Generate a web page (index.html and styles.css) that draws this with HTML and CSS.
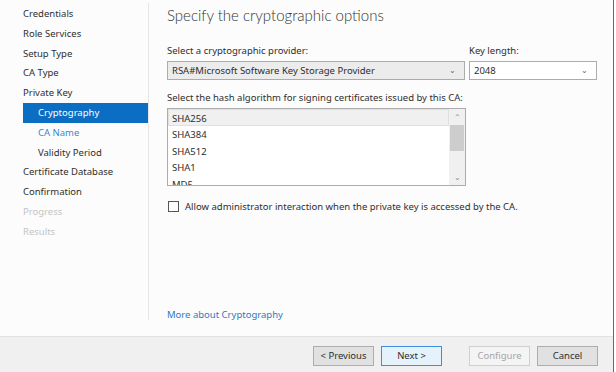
FILE: index.html
```html
<!DOCTYPE html>
<html>
<head>
<meta charset="utf-8">
<title>Specify the cryptographic options</title>
<link rel="stylesheet" href="styles.css">
</head>
<body>
<div class="Window">
    <div class="Wizard">
        <div class="Nav">
            <div class="NavItem">Credentials</div>
            <div class="NavItem">Role Services</div>
            <div class="NavItem">Setup Type</div>
            <div class="NavItem">CA Type</div>
            <div class="NavItem">Private Key</div>
            <div class="NavItem Sub Active">Cryptography</div>
            <div class="NavItem Sub Link">CA Name</div>
            <div class="NavItem Sub">Validity Period</div>
            <div class="NavItem">Certificate Database</div>
            <div class="NavItem">Confirmation</div>
            <div class="NavItem Off">Progress</div>
            <div class="NavItem Off">Results</div>
        </div>
        <div class="Main">
            <div class="Heading">Specify the cryptographic options</div>
            <div class="Row">
                <div class="Field Provider">
                    <div class="Label">Select a cryptographic provider:</div>
                    <div class="Combo Gray"><span>RSA#Microsoft Software Key Storage Provider</span><span class="Chev">&#8964;</span></div>
                </div>
                <div class="Field KeyLen">
                    <div class="Label">Key length:</div>
                    <div class="Combo"><span>2048</span><span class="Chev">&#8964;</span></div>
                </div>
            </div>
            <div class="Label">Select the hash algorithm for signing certificates issued by this CA:</div>
            <div class="List">
                <div class="Items">
                    <div class="Item Sel">SHA256</div>
                    <div class="Item">SHA384</div>
                    <div class="Item">SHA512</div>
                    <div class="Item">SHA1</div>
                    <div class="Item">MD5</div>
                </div>
                <div class="Scroll">
                    <div class="Arrow">&#8963;</div>
                    <div class="Track"><div class="Thumb"></div></div>
                    <div class="Arrow">&#8964;</div>
                </div>
            </div>
            <label class="Check"><span class="Box"></span>Allow administrator interaction when the private key is accessed by the CA.</label>
            <div class="Spacer"></div>
            <a class="More" href="#">More about Cryptography</a>
        </div>
    </div>
    <div class="Footer">
        <button class="Btn">&lt; Previous</button>
        <button class="Btn Focus">Next &gt;</button>
        <button class="Btn Disabled Gap">Configure</button>
        <button class="Btn">Cancel</button>
    </div>
</div>
</body>
</html>
```
FILE: styles.css
```css
body { margin: 0; background: #fff; font-family: "Noto Sans", "Open Sans", sans-serif; font-size: 9.5px; color: #2e2e2e; }
.Window { width: 613px; height: 372px; border-right: 1px solid #2a78c4; background: #fcfcfc; display: flex; flex-direction: column; }
.Wizard { flex: 1; display: flex; }
.Nav { width: 125px; padding: 1px 0 0 23px; border-right: 1px solid #e6e6e6; margin: 3px 0 16px 0; }
.NavItem { height: 19.8px; line-height: 19.8px; white-space: nowrap; }
.NavItem.Sub { padding-left: 15px; }
.NavItem.Active { background: #0b6ec3; color: #fff; }
.NavItem.Link { color: #3a87d4; }
.NavItem.Off { color: #c4c4c4; }
.Main { flex: 1; padding: 3px 16px 0 18px; display: flex; flex-direction: column; }
.Heading { font-family: Lato, "Noto Sans", sans-serif; font-size: 15px; font-weight: 300; color: #333; height: 24px; line-height: 24px; margin-bottom: 17px; }
.Row { display: flex; gap: 4px; margin-bottom: 11px; }
.Provider { width: 298px; }
.KeyLen { width: 128px; }
.Label { height: 14px; line-height: 14px; margin-bottom: 3px; white-space: nowrap; }
.Combo { height: 17px; border: 1px solid #acacac; background: #fff; display: flex; justify-content: space-between; align-items: center; padding: 0 8px 0 4px; line-height: 17px; }
.Combo.Gray { background: #ececec; }
.Chev { font-size: 8px; color: #666; line-height: 8px; height: 10px; }
.List { width: 297px; height: 76px; border: 1px solid #acacac; background: #fff; display: flex; overflow: hidden; margin-bottom: 14px; }
.Items { flex: 1; }
.Item { height: 16.5px; line-height: 18px; padding-left: 4px; }
.Item.Sel { background: #f0f0f0; border: 1px solid #e0e0e0; height: 15px; line-height: 17px; padding-left: 3px; }
.Scroll { width: 16px; background: #f0f0f0; display: flex; flex-direction: column; }
.Arrow { height: 16px; line-height: 16px; text-align: center; font-size: 8px; color: #8a8a8a; }
.Track { flex: 1; }
.Thumb { margin: 0 1px; height: 26px; background: #cdcdcd; }
.Check { display: flex; align-items: center; gap: 6px; padding-left: 1px; }
.Box { width: 9px; height: 9px; border: 1px solid #555; background: #fff; }
.Spacer { flex: 1; }
.More { color: #2f78c4; text-decoration: none; margin-bottom: 15px; }
.Footer { height: 35px; background: #f0f0f0; border-top: 1px solid #e3e3e3; display: flex; align-items: center; justify-content: flex-end; gap: 7px; padding-right: 15px; }
.Btn { width: 61px; height: 20px; border: 1px solid #adadad; background: #e1e1e1; font-family: inherit; font-size: 9.5px; color: #2e2e2e; padding: 0; margin-top: 2px; }
.Btn.Focus { border-color: #3c8fdd; background: #e5f1fb; }
.Btn.Disabled { border-color: #cfcfcf; background: #f4f4f4; color: #a6a6a6; }
.Btn.Gap { margin-left: 20px; }
```
